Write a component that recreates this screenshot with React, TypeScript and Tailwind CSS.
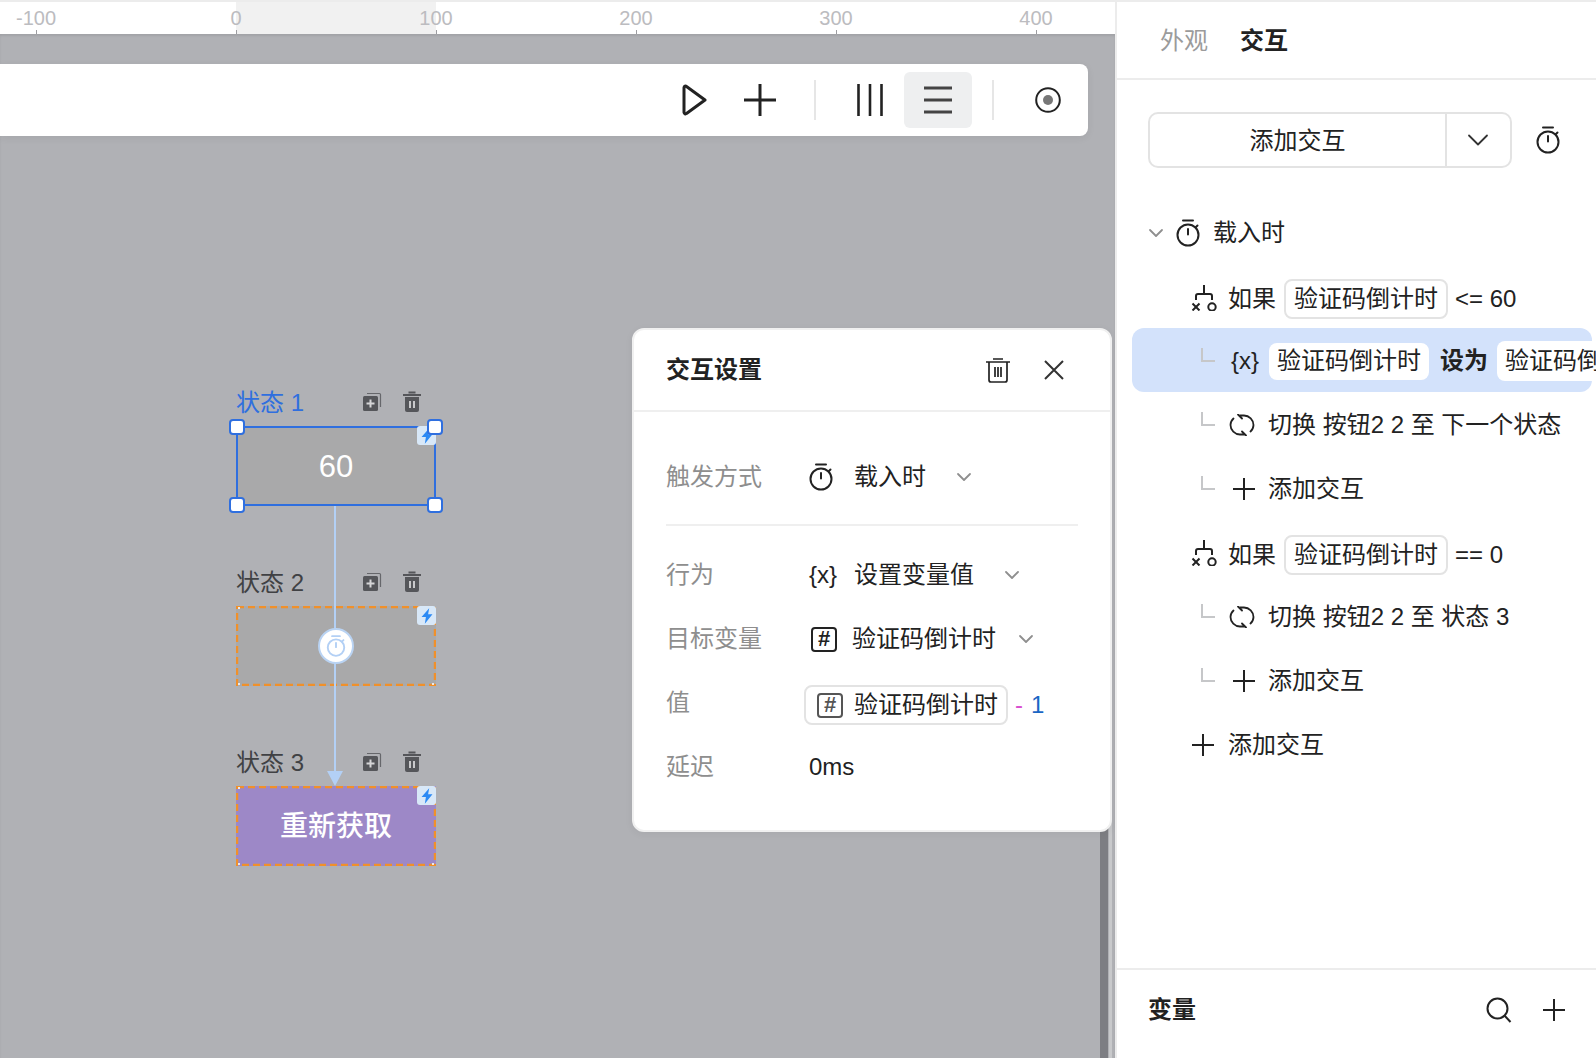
import React from 'react';

const RULER_MARKS = ['-100', '0', '100', '200', '300', '400'];
const VAR_NAME = '验证码倒计时';

const Stopwatch: React.FC<{ color?: string }> = ({ color = '#222' }) => (
  <svg width="24" height="28" viewBox="0 0 24 28" fill="none" stroke={color} strokeWidth="2" className="shrink-0">
    <path d="M7 1.500h10M12 10v5.500M19.500 8.500l2-2" strokeLinecap="round" />
    <circle cx="12" cy="16" r="10.500" />
  </svg>
);

const Chevron: React.FC<{ size?: number; color?: string; width?: number }> = ({ size = 16, color = '#8f8f8f', width = 1.8 }) => (
  <svg width={size} height={size} viewBox="0 0 16 16" fill="none" stroke={color} strokeWidth={width} className="shrink-0">
    <path d="M2 5l6 6 6-6" strokeLinecap="round" strokeLinejoin="round" />
  </svg>
);

const Plus: React.FC<{ size?: number; width?: number }> = ({ size = 22, width = 2 }) => (
  <svg width={size} height={size} viewBox="0 0 22 22" fill="none" stroke="#222" strokeWidth={width * (22 / size)} className="shrink-0">
    <path d="M0 11h22M11 0v22" />
  </svg>
);

const Branch = () => (
  <svg width="26" height="26" viewBox="0 0 26 26" fill="none" stroke="#222" strokeWidth="2" className="shrink-0 mb-[3px]">
    <path d="M13 0v9M5 15v-4a2 2 0 0 1 2-2h12a2 2 0 0 1 2 2v4" />
    <path d="M1.500 18.500l7 7M8.500 18.500l-7 7" />
    <circle cx="21" cy="22" r="3.700" />
  </svg>
);

const Loop = () => (
  <svg width="26" height="22" viewBox="0 0 26 22" fill="none" stroke="#222" strokeWidth="1.800" className="shrink-0">
    <path d="M11 1.500h4A9.500 9.500 0 0 1 24.500 11a9 9 0 0 1-3 6.500M9 .5l4 4" strokeLinecap="round" strokeLinejoin="round" />
    <path d="M15 20.500h-4A9.500 9.500 0 0 1 1.500 11a9 9 0 0 1 3-6.500M17 21.500l-4-4" strokeLinecap="round" strokeLinejoin="round" />
  </svg>
);

const Elbow = () => <span className="w-[14px] h-[14px] mb-[12px] shrink-0 border-l-2 border-b-2 border-[#c6c7c9]" />;

const HashBox: React.FC<{ dim?: boolean }> = ({ dim }) => (
  <span className={`w-[26px] h-[25px] shrink-0 rounded-[4px] border-2 flex items-center justify-center text-[22px] leading-none font-bold ${dim ? 'border-[#555] text-[#555]' : 'border-[#222] text-[#222]'}`}>
    #
  </span>
);

const Chip: React.FC<{ children: React.ReactNode }> = ({ children }) => (
  <span className="shrink-0 h-[40px] px-2 rounded-[8px] border-2 border-[#e3e3e3] bg-white flex items-center">{children}</span>
);

const Bolt: React.FC<{ className: string }> = ({ className }) => (
  <span className={`absolute w-[19px] h-[19px] bg-[#d8e8f8] rounded-[3px] flex items-center justify-center ${className}`}>
    <svg width="12" height="16" viewBox="0 0 11 14" fill="#2c8af4">
      <path d="M7.500 0L.5 8h4L3.500 14 10.500 5.500H6.500z" />
    </svg>
  </span>
);

const StateActions = () => (
  <div className="flex items-center gap-[20px] mr-[14px] mb-[2px]">
    <svg width="20" height="20" viewBox="0 0 20 20" fill="none">
      <path d="M5 1.500h12.500a1 1 0 0 1 1 1V15" stroke="#66676b" strokeWidth="1.200" />
      <rect x="1" y="4" width="15" height="15" rx="1.500" fill="#55565a" />
      <path d="M8.500 7.500v8M4.500 11.500h8" stroke="#d5d5d7" strokeWidth="2" />
    </svg>
    <svg width="20" height="22" viewBox="0 0 20 22" fill="none">
      <path d="M1 4h18M6.500 1.500h7" stroke="#55565a" strokeWidth="2" />
      <path d="M3 6h14v13a2 2 0 0 1-2 2H5a2 2 0 0 1-2-2z" fill="#55565a" />
      <path d="M8 10v7M12 10v7" stroke="#c8c8ca" strokeWidth="2" />
    </svg>
  </div>
);

const Handle: React.FC<{ className: string }> = ({ className }) => (
  <span className={`absolute w-[16px] h-[16px] rounded-[4px] bg-white border-2 border-[#2f6fdf] ${className}`} />
);

// dash length of the orange outline can't be set with border-dashed
const DashedOutline = () => (
  <svg width="200" height="80" viewBox="0 0 200 80" fill="none" className="absolute inset-0">
    <rect x="1" y="1" width="198" height="78" stroke="#f0902a" strokeWidth="2.400" strokeDasharray="7 4" />
    <path d="M2 2h2M196 2h2M2 78h2M196 78h2" stroke="#e9e9e9" strokeWidth="2" />
  </svg>
);

const StateNode: React.FC<{ label: string; selected?: boolean; fill?: string; children?: React.ReactNode }> = ({ label, selected, fill, children }) => (
  <div className="flex flex-col">
    <div className="h-[50px] pt-[4px] flex items-center justify-between">
      <span className={`text-[24px] leading-none ${selected ? 'text-[#2f6fdf]' : 'text-[#404144]'}`}>{label}</span>
      <StateActions />
    </div>
    <div
      className={`relative h-[80px] flex items-center justify-center text-white ${selected ? 'border-2 border-[#2f6fdf]' : ''} ${fill === 'purple' ? 'bg-[#9d88c7]' : 'bg-[#a9a9aa]'}`}
    >
      {children}
      {!selected && <DashedOutline />}
      <Bolt className={selected ? '-top-[2px] -right-[2px]' : 'top-0 right-0'} />
      {selected && (
        <>
          <Handle className="-left-[9px] -top-[9px]" />
          <Handle className="-right-[9px] -top-[9px]" />
          <Handle className="-left-[9px] -bottom-[9px]" />
          <Handle className="-right-[9px] -bottom-[9px]" />
        </>
      )}
    </div>
  </div>
);

const SettingRow: React.FC<{ label: string; children: React.ReactNode }> = ({ label, children }) => (
  <div className="h-[64px] flex items-center">
    <span className="w-[143px] shrink-0 text-[#8e8e8e]">{label}</span>
    {children}
  </div>
);

export default function App() {
  return (
    <div className="w-[1596px] h-[1058px] overflow-hidden bg-white flex flex-col text-[24px] text-[#222] font-['Liberation_Sans','Noto_Sans_CJK_SC',sans-serif]">
      <div className="h-[2px] shrink-0 bg-[#ececec]" />
      <div className="flex-1 flex min-h-0">
        {/* canvas side */}
        <div className="relative w-[1115px] shrink-0 flex flex-col overflow-hidden">
          <div className="relative h-[32px] shrink-0 bg-white flex ml-[-64px]">
            <div className="absolute left-[300px] w-[200px] top-0 bottom-0 bg-[#f1f1f1]" />
            {RULER_MARKS.map((mark) => (
              <div key={mark} className="relative w-[200px] shrink-0 flex flex-col items-center justify-end">
                <span className="text-[20px] leading-[20px] mb-[2px] text-[#bcbcc0]">{mark}</span>
                <span className="w-px h-[4px] bg-[#9d9da1]" />
              </div>
            ))}
          </div>

          <div className="flex-1 bg-[#b0b1b5] shadow-[inset_0_2px_2px_rgba(0,0,0,0.08)] flex flex-col">
            <div className="mt-[30px] w-[1088px] h-[72px] shrink-0 bg-white rounded-r-[8px] shadow-[0_2px_8px_rgba(0,0,0,0.06)] flex items-center pl-[682px]">
              <svg width="25" height="32" viewBox="0 0 25 32" fill="none" stroke="#222" strokeWidth="3" strokeLinejoin="round" className="shrink-0">
                <path d="M2 3.500a1.500 1.500 0 0 1 2.500-1L23 16 4.500 29.500a1.500 1.500 0 0 1-2.500-1z" />
              </svg>
              <span className="ml-[37px]">
                <Plus size={32} width={3} />
              </span>
              <span className="ml-[38px] w-[2px] h-[40px] bg-[#e6e6e6]" />
              <svg width="26" height="32" viewBox="0 0 26 32" fill="none" stroke="#222" strokeWidth="2.600" className="ml-[41px] shrink-0">
                <path d="M1.500 0v32M13 0v32M24.500 0v32" />
              </svg>
              <span className="ml-[21px] w-[68px] h-[56px] rounded-[6px] bg-[#eeeff0] flex items-center justify-center">
                <svg width="28" height="28" viewBox="0 0 28 28" fill="none" stroke="#444" strokeWidth="3">
                  <path d="M0 2h28M0 14h28M0 26h28" />
                </svg>
              </span>
              <span className="ml-[20px] w-[2px] h-[40px] bg-[#e6e6e6]" />
              <svg width="26" height="26" viewBox="0 0 26 26" fill="none" className="ml-[41px] shrink-0">
                <circle cx="13" cy="13" r="11.800" stroke="#222" strokeWidth="2" />
                <circle cx="13" cy="13" r="5" fill="#777" />
              </svg>
            </div>

            {/* state nodes */}
            <div className="relative ml-[236px] mt-[240px] w-[200px] flex flex-col gap-[50px]">
              <StateNode label="状态 1" selected>
                <span className="text-[31px] pt-[2px]">60</span>
              </StateNode>
              <StateNode label="状态 2" />
              <StateNode label="状态 3" fill="purple">
                <span className="text-[28px] font-medium pt-[2px]">重新获取</span>
              </StateNode>

              <span className="absolute left-[98px] top-[130px] w-[2px] h-[265px] bg-[#b3d0f5]" />
              <svg width="16" height="15" viewBox="0 0 16 15" fill="#b3d0f5" className="absolute left-[91px] top-[395px]">
                <path d="M0 0h16L8 15z" />
              </svg>
              <span className="absolute left-[82px] top-[252px] w-[36px] h-[36px] rounded-full bg-white border-2 border-[#b9d3f3] flex items-center justify-center">
                <svg width="20" height="22" viewBox="0 0 24 28" fill="none" stroke="#b3d0f5" strokeWidth="2.400">
                  <path d="M7 1.500h10M12 10v5.500M19.500 8.500l2-2" strokeLinecap="round" />
                  <circle cx="12" cy="16" r="10.500" />
                </svg>
              </span>
            </div>
          </div>

          {/* scrollbar under the panel */}
          <div className="absolute right-[7px] top-[700px] bottom-0 w-[8px] bg-[#7d7e83]" />
          <div className="absolute right-[3px] top-[700px] bottom-0 w-[3px] bg-[#c8c9cb]" />

          {/* interaction settings panel */}
          <div className="absolute left-[632px] top-[326px] w-[480px] h-[504px] bg-white rounded-[12px] border-2 border-[#f0f0f0] shadow-[0_2px_8px_rgba(0,0,0,0.05)] flex flex-col">
            <div className="h-[82px] shrink-0 border-b-2 border-[#efefef] flex items-center pl-[32px] pr-[46px]">
              <span className="font-bold flex-1">交互设置</span>
              <svg width="24" height="25" viewBox="0 0 24 25" fill="none" stroke="#222" strokeWidth="1.700">
                <path d="M0 4h24M7 1h10M3 4v18a2 2 0 0 0 2 2h14a2 2 0 0 0 2-2V4M9 9v10M12 9v10M15 9v10" />
              </svg>
              <svg width="20" height="20" viewBox="0 0 20 20" fill="none" stroke="#333" strokeWidth="2" className="ml-[34px]">
                <path d="M1 1l18 18M19 1L1 19" />
              </svg>
            </div>
            <div className="pl-[32px] pr-[32px] pt-[33px]">
              <SettingRow label="触发方式">
                <Stopwatch />
                <span className="ml-[21px]">载入时</span>
                <span className="ml-[30px]">
                  <Chevron />
                </span>
              </SettingRow>
              <div className="h-[2px] bg-[#efefef] mt-[15px] mb-[17px]" />
              <SettingRow label="行为">
                <span className="w-[30px]">{'{x}'}</span>
                <span className="ml-[15px]">设置变量值</span>
                <span className="ml-[30px]">
                  <Chevron />
                </span>
              </SettingRow>
              <SettingRow label="目标变量">
                <span className="ml-[2px]">
                  <HashBox />
                </span>
                <span className="ml-[15px]">{VAR_NAME}</span>
                <span className="ml-[22px]">
                  <Chevron />
                </span>
              </SettingRow>
              <SettingRow label="值">
                <span className="-ml-[5px] mt-[4px] flex items-center">
                  <span className="shrink-0 h-[40px] w-[204px] pl-[11px] rounded-[8px] border-2 border-[#e3e3e3] flex items-center">
                    <HashBox dim />
                    <span className="ml-[11px]">{VAR_NAME}</span>
                  </span>
                  <span className="ml-[7px] text-[#d94fd0]">-</span>
                  <span className="ml-[8px] text-[#1a66c4]">1</span>
                </span>
              </SettingRow>
              <SettingRow label="延迟">
                <span>0ms</span>
              </SettingRow>
            </div>
          </div>
        </div>

        {/* right sidebar */}
        <div className="w-[481px] shrink-0 border-l-2 border-[#ececec] flex flex-col overflow-hidden whitespace-nowrap">
          <div className="h-[78px] shrink-0 border-b-2 border-[#ececec] flex items-center pl-[43px] pt-[2px] gap-[32px]">
            <span className="text-[#9b9b9b]">外观</span>
            <span className="font-bold">交互</span>
          </div>

          <div className="mt-[32px] pl-[31px] flex items-center">
            <div className="w-[364px] h-[56px] rounded-[10px] border-2 border-[#e3e3e3] flex">
              <span className="w-[297px] pt-[2px] border-r-2 border-[#e3e3e3] flex items-center justify-center">添加交互</span>
              <span className="flex-1 flex items-center justify-center pr-[2px]">
                <Chevron size={24} color="#333" width={1.2} />
              </span>
            </div>
            <span className="ml-[24px]">
              <Stopwatch />
            </span>
          </div>

          <div className="mt-[32px] flex flex-col">
            <div className="h-[64px] flex items-center pl-[31px] pt-[2px]">
              <Chevron />
              <span className="ml-[12px]">
                <Stopwatch />
              </span>
              <span className="ml-[13px]">载入时</span>
            </div>
            <div className="h-[60px] mt-[4px] flex items-center pl-[74px] pt-[2px]">
              <Branch />
              <span className="ml-[11px]">如果</span>
              <span className="ml-[8px]">
                <Chip>{VAR_NAME}</Chip>
              </span>
              <span className="ml-[7px]">&lt;= 60</span>
            </div>
            <div className="h-[64px] ml-[15px] mr-[4px] rounded-[12px] bg-[#d3e2fb] flex items-center pl-[69px] pt-[2px]">
              <Elbow />
              <span className="ml-[16px] w-[28px]">{'{x}'}</span>
              <span className="ml-[10px] h-[37px] px-2 rounded-[8px] bg-white flex items-center shrink-0">{VAR_NAME}</span>
              <span className="ml-[11px] font-bold">设为</span>
              <span className="ml-[9px] h-[40px] px-2 rounded-[8px] bg-white flex items-center shrink-0">{VAR_NAME}</span>
            </div>
            <div className="h-[66px] flex items-center pl-[84px]">
              <Elbow />
              <span className="ml-[14px]">
                <Loop />
              </span>
              <span className="ml-[13px]">切换 按钮2 2 至 下一个状态</span>
            </div>
            <div className="h-[64px] flex items-center pl-[84px] pb-[2px]">
              <Elbow />
              <span className="ml-[18px]">
                <Plus />
              </span>
              <span className="ml-[13px]">添加交互</span>
            </div>
            <div className="h-[62px] flex items-center pl-[74px] pt-[3px]">
              <Branch />
              <span className="ml-[11px]">如果</span>
              <span className="ml-[8px]">
                <Chip>{VAR_NAME}</Chip>
              </span>
              <span className="ml-[7px]">== 0</span>
            </div>
            <div className="h-[66px] flex items-center pl-[84px]">
              <Elbow />
              <span className="ml-[14px]">
                <Loop />
              </span>
              <span className="ml-[13px]">切换 按钮2 2 至 状态 3</span>
            </div>
            <div className="h-[60px] flex items-center pl-[84px] pt-[2px]">
              <Elbow />
              <span className="ml-[18px]">
                <Plus />
              </span>
              <span className="ml-[13px]">添加交互</span>
            </div>
            <div className="h-[70px] flex items-center pl-[75px]">
              <Plus />
              <span className="ml-[14px]">添加交互</span>
            </div>
          </div>

          <div className="mt-auto h-[90px] shrink-0 border-t-2 border-[#ececec] flex items-center pl-[31px] pr-[31px] pb-2">
            <span className="font-bold flex-1">变量</span>
            <svg width="26" height="26" viewBox="0 0 26 26" fill="none" stroke="#222" strokeWidth="2">
              <circle cx="11.500" cy="11.500" r="10" />
              <path d="M18.500 18.500l6 6.500" />
            </svg>
            <span className="ml-[31px]">
              <Plus />
            </span>
          </div>
        </div>
      </div>
    </div>
  );
}
